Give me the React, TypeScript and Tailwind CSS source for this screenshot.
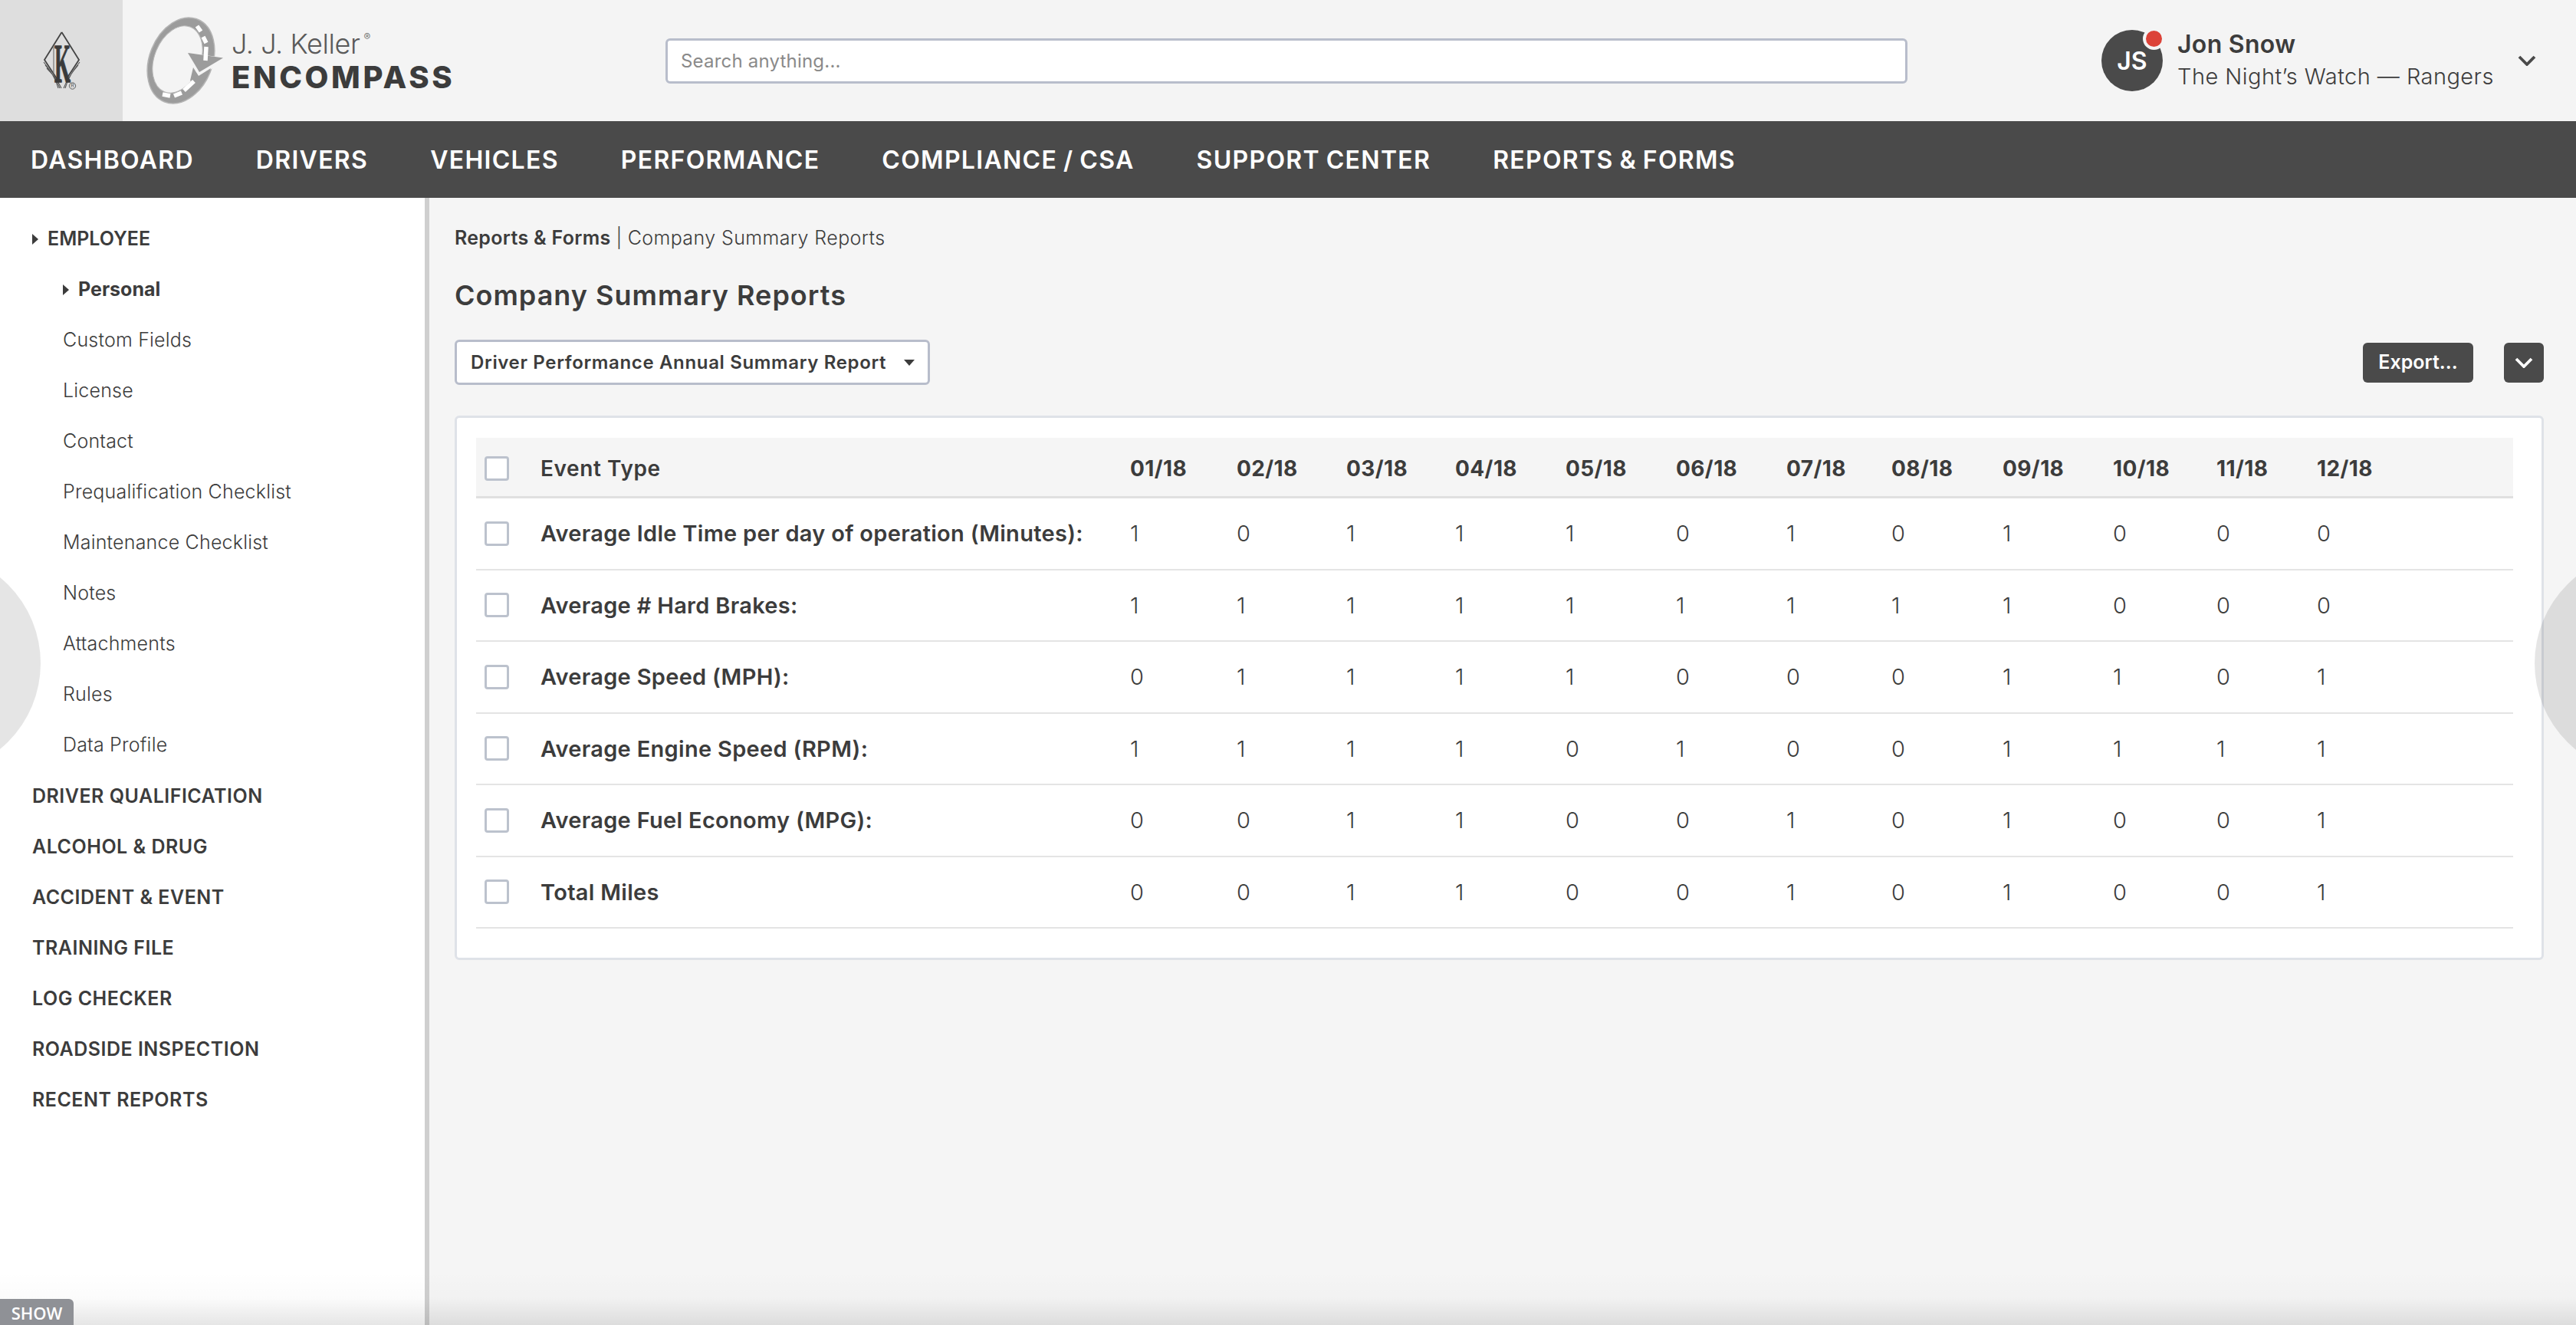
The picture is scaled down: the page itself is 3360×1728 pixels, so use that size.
import React from "react";

const navItems = ["DASHBOARD", "DRIVERS", "VEHICLES", "PERFORMANCE", "COMPLIANCE / CSA", "SUPPORT CENTER", "REPORTS & FORMS"];
const subItems = ["Custom Fields", "License", "Contact", "Prequalification Checklist", "Maintenance Checklist", "Notes", "Attachments", "Rules", "Data Profile"];
const groups = ["DRIVER QUALIFICATION", "ALCOHOL & DRUG", "ACCIDENT & EVENT", "TRAINING FILE", "LOG CHECKER", "ROADSIDE INSPECTION", "RECENT REPORTS"];
const months = ["01/18", "02/18", "03/18", "04/18", "05/18", "06/18", "07/18", "08/18", "09/18", "10/18", "11/18", "12/18"];
const rows: [string, string][] = [
  ["Average Idle Time per day of operation (Minutes):", "101110101000"],
  ["Average # Hard Brakes:", "111111111000"],
  ["Average Speed (MPH):", "011110001101"],
  ["Average Engine Speed (RPM):", "111101001111"],
  ["Average Fuel Economy (MPG):", "001100101001"],
  ["Total Miles", "001100101001"],
];
const gridCols = "grid grid-cols-[84px_769px_139px_143px_142px_144px_144px_144px_137px_145px_144px_135px_131px_1fr] items-center content-center";

function Caret() {
  return (
    <svg width="8" height="14" viewBox="0 0 8 14" className="shrink-0">
      <path d="M0 0 L8 7 L0 14 Z" fill="#3c3c3c" />
    </svg>
  );
}

function Check() {
  return <span className="block h-8 w-8 rounded-[4px] border-[3px] border-[#bcc2cd] bg-white" />;
}

function Chevron({ color, w, h }: { color: string; w: number; h: number }) {
  return (
    <svg width={w} height={h} viewBox="0 0 24 14">
      <path d="M2 2 L12 12 L22 2" fill="none" stroke={color} strokeWidth="3.8" />
    </svg>
  );
}

function KellerMark() {
  return (
    <svg width="100" height="130" viewBox="31 14 100 130">
      <path d="M80.5 42 L58 78 L75 104 M80.5 42 L103 78 L86 104" fill="none" stroke="#444" strokeWidth="1.8" />
      <path d="M70 60 L70 96" stroke="#777" strokeWidth="1.2" />
      <path d="M57 81 C64 90 72 100 76 115 M59 85 C66 93 73 102 78 115 M61 89 C68 96 75 104 80 115 M104 81 C97 90 89 100 85 115 M102 85 C95 93 88 102 83 115" fill="none" stroke="#555" strokeWidth="1.1" />
      <text x="71" y="107" fontFamily="'Liberation Serif', serif" fontWeight="700" fontSize="72" textLength="21" lengthAdjust="spacingAndGlyphs" fill="#3a3a3a" stroke="#3a3a3a" strokeWidth="1.3">K</text>
      <circle cx="94.5" cy="112" r="4.2" fill="none" stroke="#555" strokeWidth="0.9" />
      <text x="94.5" y="114.4" textAnchor="middle" fontFamily="'Liberation Sans', sans-serif" fontSize="6.5" fill="#555">R</text>
    </svg>
  );
}

function RoadMark() {
  return (
    <svg width="106" height="116" viewBox="186 20 106 116">
      <ellipse cx="234" cy="78" rx="41" ry="58" transform="rotate(22 234 78)" fill="#9c9c9c" stroke="#b4b4b4" strokeWidth="1.5" />
      <ellipse cx="229.5" cy="76.5" rx="30" ry="45.5" transform="rotate(22 229.5 76.5)" fill="#f4f4f4" stroke="#b9b9b9" strokeWidth="1" />
      <path d="M250 87 L257 99 L282 84 L289 74 L243 68 Z" fill="#f4f4f4" />
      <path d="M243 68 L289 74.5 L258 93 Z" fill="#9c9c9c" />
      <path d="M250 87 L257 98 L273 88 L268 100 L255 112 L246 104 Z" fill="#9c9c9c" />
      <path d="M255 33 L260 40 M263 47 L267 55 M267 60 L266 78 M251 105 L238 117 M235 120 L225 124 M220 124 L210 122" stroke="#fff" strokeWidth="5.5" fill="none" />
    </svg>
  );
}

export default function App() {
  return (
    <div className="relative flex h-screen w-full flex-col overflow-hidden bg-[#f5f5f5] font-[Inter,sans-serif] text-[#3c3c3c]">
      <header className="flex h-[158px] shrink-0 items-center bg-[#f4f4f4]">
        <div className="flex h-full w-[160px] shrink-0 items-center justify-center bg-[#dedede] pl-[1px]">
          <KellerMark />
        </div>
        <div className="ml-[28px] flex w-[680px] shrink-0 items-center gap-[8px]">
          <RoadMark />
          <div className="flex flex-col">
            <div className="flex h-[44px] items-start text-[36px] font-light leading-[44px] tracking-[-0.4px] text-[#5a5a5a]">
              J. J. Keller<span className="ml-[5px] mt-[-9px] text-[13px] font-light">®</span>
            </div>
            <div className="text-[40px] font-extrabold leading-[44px] tracking-[3.6px] text-[#3c3c3c]">ENCOMPASS</div>
          </div>
        </div>
        <input
          readOnly
          placeholder="Search anything..."
          className="h-[59px] w-[1620px] shrink-0 rounded-[6px] border-[3px] border-[#b8bdcb] bg-white px-[17px] text-[24px] font-normal tracking-[0.2px] outline-none placeholder:text-[#8a8a8a]"
        />
        <div className="relative ml-[253px] flex h-20 w-20 shrink-0 items-center justify-center rounded-full bg-[#4a4a4a] pt-[2px] text-[32px] font-semibold text-white">
          JS
          <span className="absolute right-[-3px] top-[-3px] h-[29px] w-[29px] rounded-full border-[4px] border-[#f4f4f4] bg-[#dc4238]" />
        </div>
        <div className="ml-[19px] flex w-[444px] shrink-0 flex-col">
          <div className="mt-[-3px] text-[32px] font-semibold leading-[44px] tracking-[0.3px]">Jon Snow</div>
          <div className="text-[29px] font-light leading-[40px] tracking-[0.45px]">The Night’s Watch — Rangers</div>
        </div>
        <Chevron color="#4a4a4a" w={24} h={14} />
      </header>

      <nav className="flex h-[100px] shrink-0 items-center gap-[81px] bg-[#4a4a4a] pl-[40px] pt-[1px] text-[32px] font-semibold tracking-[1.3px] [word-spacing:-1.5px] text-white">
        {navItems.map((n) => (
          <span key={n}>{n}</span>
        ))}
      </nav>

      <div className="flex min-h-0 flex-1">
        <aside className="w-[560px] shrink-0 border-r-[6px] border-[#cfcfcf] bg-white pt-[21px]">
          <div className="flex h-[66px] items-center gap-[12px] pl-[42px] text-[25px] font-semibold">
            <Caret />
            <span>EMPLOYEE</span>
          </div>
          <div className="flex h-[66px] items-center gap-[12px] pl-[82px] text-[25px] font-bold">
            <Caret />
            <span>Personal</span>
          </div>
          {subItems.map((s) => (
            <div key={s} className="flex h-[66px] items-center pl-[82px] text-[25px] font-light tracking-[0.2px]">
              {s}
            </div>
          ))}
          {groups.map((g) => (
            <div key={g} className="flex h-[66px] items-center pl-[42px] pt-[1px] text-[25px] font-semibold tracking-[0.5px]">
              {g}
            </div>
          ))}
        </aside>

        <main className="min-w-0 flex-1 pl-[33px]">
          <div className="flex h-[106px] items-center text-[25px] tracking-[0.3px]">
            <span className="font-semibold">Reports &amp; Forms</span>
            <span className="mx-[7px] font-light">|</span>
            <span className="font-light tracking-[0.4px]">Company Summary Reports</span>
          </div>
          <h1 className="mt-[-1px] h-[44px] text-[36px] font-semibold leading-[44px] tracking-[1px]">Company Summary Reports</h1>
          <div className="mt-[36px] flex h-[59px] w-[2725px] items-center justify-between">
            <div className="flex h-[59px] w-[620px] items-center rounded-[6px] border-[3px] border-[#b8bdcb] bg-white pl-[18px] pt-[1px] text-[24px] font-semibold tracking-[0.65px]">
              <span>Driver Performance Annual Summary Report</span>
              <span className="ml-[23px] h-0 w-0 border-x-[7px] border-t-[8px] border-x-transparent border-t-[#3c3c3c]" />
            </div>
            <div className="flex items-center gap-[40px]">
              <button className="h-[52px] w-[144px] rounded-[6px] bg-[#4a4a4a] text-[25px] font-semibold text-white">Export...</button>
              <button className="flex h-[52px] w-[52px] items-center justify-center rounded-[6px] bg-[#4a4a4a]">
                <Chevron color="#ffffff" w={24} h={14} />
              </button>
            </div>
          </div>

          <section className="mt-[40px] w-[2725px] rounded-[6px] border-[3px] border-[#dfe2e8] bg-white pb-[38px] pl-[25px] pr-[37px] pt-[26px]">
            <div className={`${gridCols} h-[79px] border-b-[3px] border-[#e0e0e0] bg-[#f5f5f5] pt-[3px] text-[28px] font-bold tracking-[0.4px]`}>
              <span className="pl-[11px]"><Check /></span>
              <span className="font-semibold tracking-[0.6px]">Event Type</span>
              {months.map((m) => (
                <span key={m}>{m}</span>
              ))}
              <span />
            </div>
            {rows.map(([label, values]) => (
              <div key={label} className={`${gridCols} h-[93.5px] border-b-2 border-[#e4e4e4] text-[29px] font-light`}>
                <span className="pl-[11px]"><Check /></span>
                <span className="font-semibold tracking-[0.3px]">{label}</span>
                {values.split("").map((v, i) => (
                  <span key={i}>{v}</span>
                ))}
                <span />
              </div>
            ))}
          </section>
        </main>
      </div>

      {/* side paddles, bottom fade and drawer tab lie over the page */}
      <div className="pointer-events-none absolute left-[-237px] top-[720px] h-[290px] w-[290px] rounded-full bg-black/10" />
      <div className="pointer-events-none absolute left-[3306px] top-[720px] h-[290px] w-[290px] rounded-full bg-black/10" />
      <div className="pointer-events-none absolute inset-x-0 bottom-0 h-[70px] bg-gradient-to-t from-black/10 via-black/[0.015] to-transparent" />
      <div className="absolute bottom-0 left-0 flex h-[34px] w-[96px] items-center justify-center rounded-tr-[6px] bg-[#8f9196] pt-[2px] font-['Open_Sans',sans-serif] text-[22px] font-semibold text-white">
        SHOW
      </div>
    </div>
  );
}
